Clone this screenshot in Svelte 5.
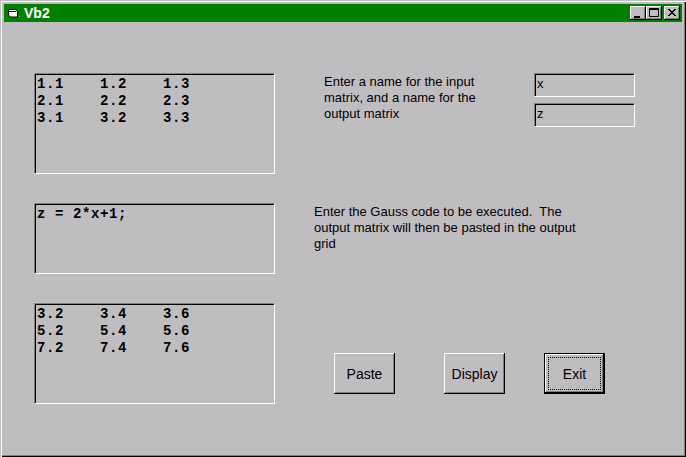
<script>
	const inputGrid = [['1.1', '1.2', '1.3'], ['2.1', '2.2', '2.3'], ['3.1', '3.2', '3.3']];
	const outputGrid = [['3.2', '3.4', '3.6'], ['5.2', '5.4', '5.6'], ['7.2', '7.4', '7.6']];
</script>

<div class="window">
	<div class="titlebar">
		<svg class="app-icon" width="16" height="14" viewBox="0 0 16 14">
			<path d="M0.500 3.500h7l2 2v5.500h-7l-2-2z" fill="#fff" stroke="#000" />
			<path d="M1 5.500h7" stroke="#000" />
			<path d="M11 10.500h1" stroke="#a0a0a0" />
		</svg>
		<span class="title">Vb2</span>
		<div class="caption-buttons">
			<div class="caption-btn">
				<svg width="16" height="14" viewBox="0 0 16 14"><path d="M4 10.500h6M4 11.500h6" stroke="#000" /></svg>
			</div>
			<div class="caption-btn">
				<svg width="16" height="14" viewBox="0 0 16 14"><path d="M3.500 2.500h9v8h-9zM3.500 3.500h9" fill="none" stroke="#000" /></svg>
			</div>
			<div class="caption-btn close">
				<svg width="16" height="14" viewBox="0 0 16 14"><path d="M4 3l7 7M5 3l7 7M11 3l-7 7M12 3l-7 7" stroke="#000" /></svg>
			</div>
		</div>
	</div>

	<div class="form">
		<div class="grids">
			<div class="textbox tall">
				{#each inputGrid as row}
					<div class="row">{#each row as cell}<span class="cell">{cell}</span>{/each}</div>
				{/each}
			</div>
			<div class="textbox short">
				<div class="row">z = 2*x+1;</div>
			</div>
			<div class="textbox tall">
				{#each outputGrid as row}
					<div class="row">{#each row as cell}<span class="cell">{cell}</span>{/each}</div>
				{/each}
			</div>
		</div>

		<div class="side">
			<div class="names">
				<p class="label names-label">Enter a name for the input<br />matrix, and a name for the<br />output matrix</p>
				<div class="name-fields">
					<div class="field">x</div>
					<div class="field">z</div>
				</div>
			</div>
			<p class="label code-label">Enter the Gauss code to be executed.&nbsp; The<br />output matrix will then be pasted in the output<br />grid</p>
			<div class="buttons">
				<button>Paste</button>
				<button>Display</button>
				<button class="default"><span>Exit</span></button>
			</div>
		</div>
	</div>
</div>

<style>
	:global(body) {
		background: #c0bdc0;
	}

	.window {
		box-sizing: border-box;
		width: 686px;
		height: 457px;
		background: #c0bdc0;
		padding: 4px;
		box-shadow: inset 1px 1px 0 #c0bdc0, inset 2px 2px 0 #fff, inset -1px -1px 0 #000, inset -2px -2px 0 #808080;
		font-family: "Liberation Sans", Arial, sans-serif;
		overflow: hidden;
	}

	.titlebar {
		display: flex;
		align-items: center;
		height: 18px;
		background: #008000;
		color: #fff;
		padding: 0 2px 0 4px;
	}

	.app-icon { flex-shrink: 0; }

	.title {
		font-size: 14px;
		font-weight: bold;
	}

	.caption-buttons {
		display: flex;
		margin-left: auto;
	}

	.caption-btn {
		box-sizing: border-box;
		width: 16px;
		height: 14px;
		background: #c0bdc0;
		box-shadow: inset -1px -1px 0 #000, inset 1px 1px 0 #fff, inset -2px -2px 0 #808080;
	}

	.caption-btn svg { display: block; }
	.caption-btn.close { margin-left: 2px; }

	.form {
		display: flex;
		padding: 51px 0 0 30px;
	}

	.grids {
		display: flex;
		flex-direction: column;
		gap: 29px;
		width: 241px;
		flex-shrink: 0;
	}

	.textbox {
		box-sizing: border-box;
		padding: 2px 0 0 2px;
		border: 1px solid;
		border-color: #808080 #fff #fff #808080;
		box-shadow: inset 1px 1px 0 #000;
		font-family: "Liberation Mono", monospace;
		font-weight: bold;
		font-size: 14px;
		letter-spacing: 0.6px;
		line-height: 17px;
		color: #000;
	}

	.tall { height: 101px; }
	.short { height: 71px; }

	.row {
		display: flex;
		white-space: pre;
	}

	.cell { width: 63px; }

	.side {
		display: flex;
		flex-direction: column;
		margin-left: 39px;
	}

	.label {
		margin: 0;
		font-size: 13px;
		line-height: 16px;
		color: #000;
		white-space: nowrap;
	}

	.names {
		display: flex;
	}

	.names-label {
		width: 210px;
		padding: 1px 0 0 10px;
	}

	.name-fields {
		display: flex;
		flex-direction: column;
		gap: 6px;
	}

	.field {
		box-sizing: border-box;
		width: 101px;
		height: 24px;
		border: 1px solid;
		border-color: #808080 #fff #fff #808080;
		box-shadow: inset 1px 1px 0 #000;
		font-size: 13px;
		line-height: 20px;
		padding: 0 0 0 2px;
		color: #000;
	}

	.code-label {
		margin-top: 77px;
	}

	.buttons {
		display: flex;
		margin: 101px 0 0 20px;
		gap: 49px;
	}

	button {
		box-sizing: border-box;
		width: 61px;
		height: 41px;
		padding: 0;
		border: none;
		border-radius: 0;
		background: #c0bdc0;
		box-shadow: inset -1px -1px 0 #000, inset 1px 1px 0 #fff, inset -2px -2px 0 #808080;
		font-family: "Liberation Sans", Arial, sans-serif;
		font-size: 14px;
		color: #000;
	}

	button.default {
		display: flex;
		padding: 4px;
		margin-left: -10px;
		box-shadow: inset 0 0 0 1px #000, inset -2px -2px 0 #000, inset 2px 2px 0 #fff, inset -3px -3px 0 #808080;
	}

	button.default span {
		flex: 1;
		display: flex;
		align-items: center;
		justify-content: center;
		border: 1px dotted #000;
	}
</style>
